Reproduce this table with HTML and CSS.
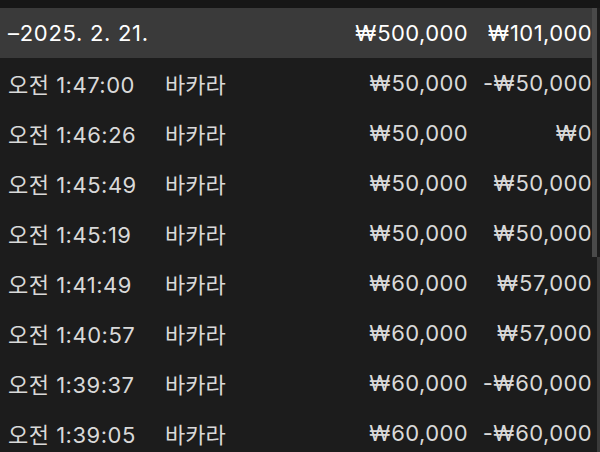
FILE: index.html
```html
<!DOCTYPE html>
<html lang="ko">
<head>
<meta charset="utf-8">
<link rel="stylesheet" href="styles.css">
</head>
<body>
<div class="topbar"></div>
<div class="main">
  <div class="list">
    <div class="row header">
      <span class="time">–2025. 2. 21.</span>
      <span class="game"></span>
      <span class="amt"><span class="won">₩</span>500,000</span>
      <span class="res"><span class="won">₩</span>101,000</span>
    </div>
    <div class="row"><span class="time">오전 1:47:00</span><span class="game">바카라</span><span class="amt"><span class="won">₩</span>50,000</span><span class="res">-<span class="won">₩</span>50,000</span></div>
    <div class="row"><span class="time">오전 1:46:26</span><span class="game">바카라</span><span class="amt"><span class="won">₩</span>50,000</span><span class="res"><span class="won">₩</span>0</span></div>
    <div class="row"><span class="time">오전 1:45:49</span><span class="game">바카라</span><span class="amt"><span class="won">₩</span>50,000</span><span class="res"><span class="won">₩</span>50,000</span></div>
    <div class="row"><span class="time">오전 1:45:19</span><span class="game">바카라</span><span class="amt"><span class="won">₩</span>50,000</span><span class="res"><span class="won">₩</span>50,000</span></div>
    <div class="row"><span class="time">오전 1:41:49</span><span class="game">바카라</span><span class="amt"><span class="won">₩</span>60,000</span><span class="res"><span class="won">₩</span>57,000</span></div>
    <div class="row"><span class="time">오전 1:40:57</span><span class="game">바카라</span><span class="amt"><span class="won">₩</span>60,000</span><span class="res"><span class="won">₩</span>57,000</span></div>
    <div class="row"><span class="time">오전 1:39:37</span><span class="game">바카라</span><span class="amt"><span class="won">₩</span>60,000</span><span class="res">-<span class="won">₩</span>60,000</span></div>
    <div class="row"><span class="time">오전 1:39:05</span><span class="game">바카라</span><span class="amt"><span class="won">₩</span>60,000</span><span class="res">-<span class="won">₩</span>60,000</span></div>
  </div>
  <div class="scroll"><div class="thumb"></div><div class="track"></div></div>
</div>
</body>
</html>
```
FILE: styles.css
```css
html, body {
  margin: 0;
  padding: 0;
  background: #1c1c1c;
  overflow: hidden;
  height: 452px;
}
body {
  font-family: "Inter", "Noto Sans CJK KR", sans-serif;
  font-size: 22px;
  color: #d9d9d9;
}
.topbar {
  height: 8px;
  background: #161616;
}
.main {
  display: flex;
  height: 444px;
}
.list {
  flex: 1;
  overflow: hidden;
}
.row {
  height: 50px;
  display: grid;
  grid-template-columns: 157px 140px 163px 124px;
  align-items: center;
  padding-left: 8px;
  box-sizing: border-box;
  white-space: nowrap;
}
.header {
  background: #3a3a3a;
  color: #ffffff;
}
.time {
  letter-spacing: 0.5px;
}
.header .time {
  letter-spacing: 0.7px;
}
.amt, .res {
  text-align: right;
  letter-spacing: 0.4px;
}
.won {
  display: inline-block;
  width: 22px;
  text-align: left;
}
.scroll {
  width: 8px;
  display: flex;
  flex-direction: column;
  background: #1c1c1c;
}
.thumb {
  height: 249px;
  width: 5px;
  background: #4a4a4a;
}
.track {
  flex: 1;
  border-right: 3px solid #3a3a3a;
  width: 5px;
}
```
